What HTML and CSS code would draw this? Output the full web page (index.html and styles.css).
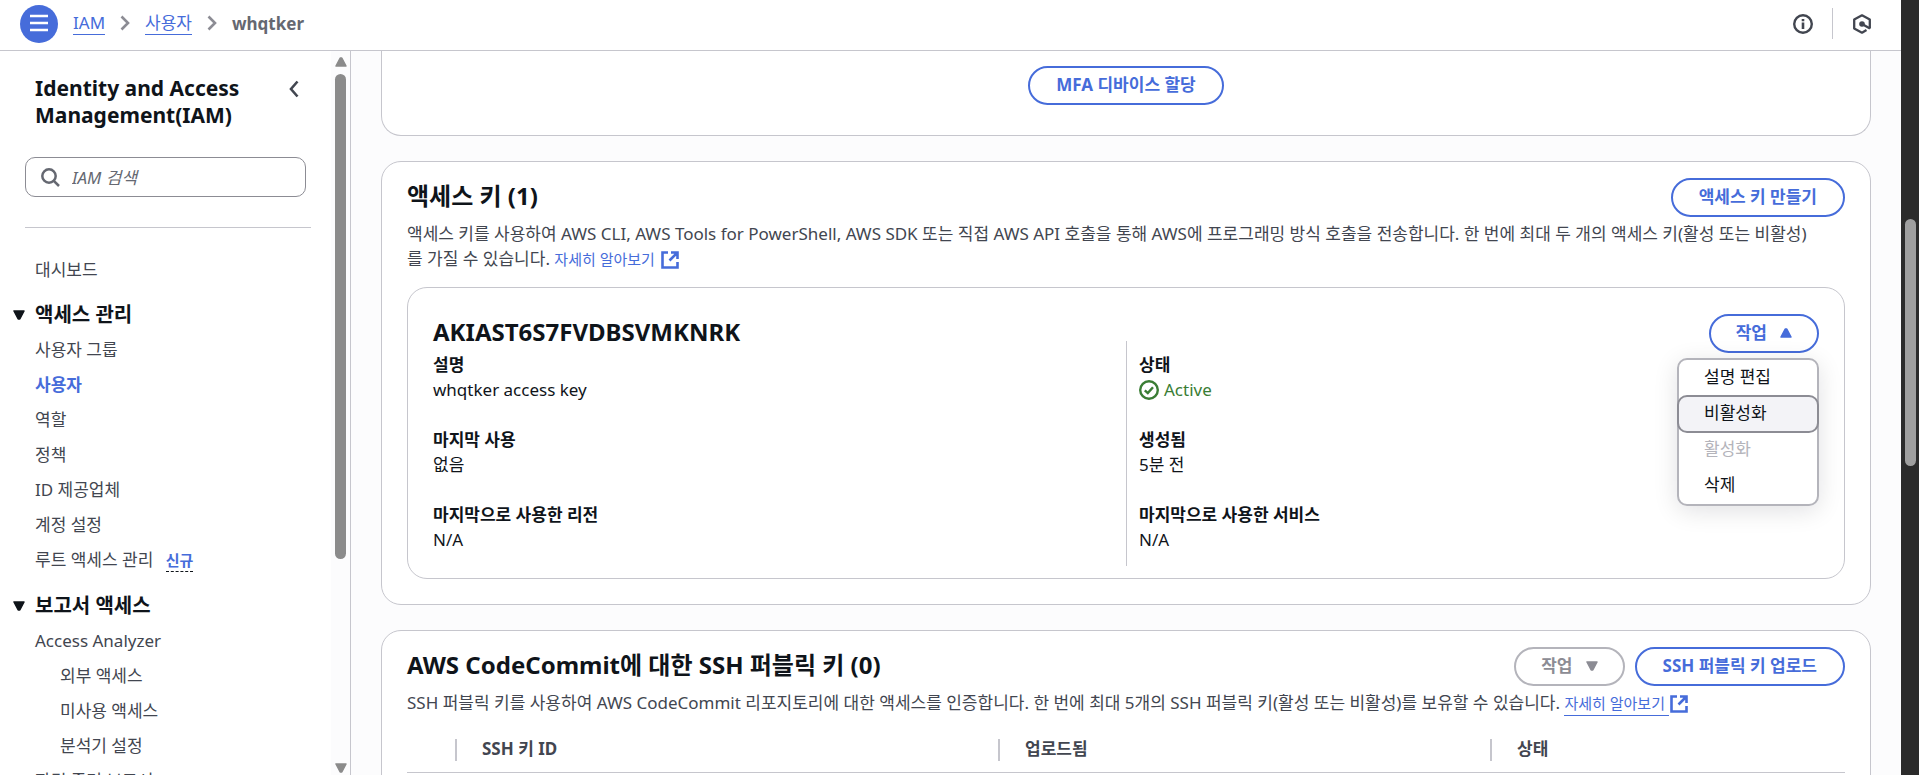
FILE: index.html
```html
<!DOCTYPE html>
<html lang="ko">
<head>
<meta charset="utf-8">
<title>whqtker | IAM</title>
<link rel="stylesheet" href="styles.css">
</head>
<body>
<svg class="sprite" aria-hidden="true">
  <symbol id="i-ext" viewBox="0 0 18 18"><path d="M7 1.500H1.500v15h15V11M10 1.500h6.500V8M16 2 8.500 9.500" fill="none" stroke="currentColor" stroke-width="2.600"/></symbol>
  <symbol id="i-right" viewBox="0 0 10 16"><path d="M1.500 1.500 8 8l-6.500 6.500" fill="none" stroke="currentColor" stroke-width="2.600"/></symbol>
  <symbol id="i-down" viewBox="0 0 12 10"><path d="M1 1h10L6.800 9H5.200z" fill="currentColor" stroke="currentColor" stroke-width="1.500" stroke-linejoin="round"/></symbol>
  <symbol id="i-up" viewBox="0 0 12 10"><path d="M1 9h10L6.800 1H5.200z" fill="currentColor" stroke="currentColor" stroke-width="1.500" stroke-linejoin="round"/></symbol>
</svg>
<div class="app">
  <div class="page">
    <header class="topbar">
      <button class="menu-btn" type="button" aria-label="메뉴">
        <svg width="20" height="18" viewBox="0 0 20 18"><path d="M1 2h18M1 9h18M1 16h18" stroke="currentColor" stroke-width="2.500"/></svg>
      </button>
      <nav class="crumbs" aria-label="이동 경로">
        <a href="#">IAM</a>
        <svg class="sep"><use href="#i-right"/></svg>
        <a href="#">사용자</a>
        <svg class="sep"><use href="#i-right"/></svg>
        <span class="current">whqtker</span>
      </nav>
      <div class="tools">
        <button class="tool" type="button" aria-label="정보">
          <svg width="20" height="20" viewBox="0 0 20 20"><circle cx="10" cy="10" r="8.800" fill="none" stroke="currentColor" stroke-width="2.400"/><path d="M10 8.500V15M10 5v2.200" stroke="currentColor" stroke-width="2.600"/></svg>
        </button>
        <button class="tool tool-last" type="button" aria-label="CloudShell">
          <svg width="20" height="20" viewBox="0 0 20 20"><path d="M14.500 16 10 18.700 2.200 14.400V5.600L10 1.300l7.800 4.300v8.800" fill="none" stroke="currentColor" stroke-width="2.300" stroke-linejoin="round"/><circle cx="10" cy="10" r="2.800" fill="currentColor"/><path d="M10 10 18 14.500" stroke="currentColor" stroke-width="2.400"/></svg>
        </button>
      </div>
    </header>
    <div class="body">
      <aside class="side">
        <div class="side-content">
          <div class="side-head">
            <h2>Identity and Access Management(IAM)</h2>
            <button class="collapse" type="button" aria-label="탐색 닫기">
              <svg width="10" height="18" viewBox="0 0 10 18"><path d="M8.500 1.500 2 9l6.500 7.500" fill="none" stroke="currentColor" stroke-width="2.600"/></svg>
            </button>
          </div>
          <label class="search">
            <svg width="19" height="19" viewBox="0 0 19 19"><circle cx="8" cy="8" r="6.700" fill="none" stroke="currentColor" stroke-width="2.500"/><path d="m12.800 12.800 5.200 5.200" stroke="currentColor" stroke-width="2.500"/></svg>
            <input type="text" placeholder="IAM 검색" aria-label="IAM 검색">
          </label>
          <nav class="nav" aria-label="IAM">
            <a class="first" href="#">대시보드</a>
            <button class="group" type="button"><svg class="tri"><use href="#i-down"/></svg>액세스 관리</button>
            <a href="#">사용자 그룹</a>
            <a class="active" href="#">사용자</a>
            <a href="#">역할</a>
            <a href="#">정책</a>
            <a href="#">ID 제공업체</a>
            <a href="#">계정 설정</a>
            <a href="#">루트 액세스 관리 <span class="new">신규</span></a>
            <button class="group" type="button"><svg class="tri"><use href="#i-down"/></svg>보고서 액세스</button>
            <a href="#">Access Analyzer</a>
            <a class="sub" href="#">외부 액세스</a>
            <a class="sub" href="#">미사용 액세스</a>
            <a class="sub" href="#">분석기 설정</a>
            <a href="#">자격 증명 보고서</a>
          </nav>
        </div>
        <div class="side-scroll" aria-hidden="true">
          <svg class="tri"><use href="#i-up"/></svg>
          <div class="track"><div class="thumb"></div></div>
          <svg class="tri"><use href="#i-down"/></svg>
        </div>
      </aside>
      <main class="main">
        <section class="card card-mfa">
          <button class="btn" type="button">MFA 디바이스 할당</button>
        </section>

        <section class="card">
          <div class="card-head">
            <h2>액세스 키 (1)</h2>
            <button class="btn" type="button">액세스 키 만들기</button>
          </div>
          <p class="desc">액세스 키를 사용하여 AWS CLI, AWS Tools for PowerShell, AWS SDK 또는 직접 AWS API 호출을 통해 AWS에 프로그래밍 방식 호출을 전송합니다. 한 번에 최대 두 개의 액세스 키(활성 또는 비활성)를 가질 수 있습니다. <a class="more" href="#"><span>자세히 알아보기</span><svg class="ext"><use href="#i-ext"/></svg></a></p>
          <article class="key">
            <div class="key-head">
              <h3>AKIAST6S7FVDBSVMKNRK</h3>
              <div class="menu-wrap">
                <button class="btn btn-menu" type="button" aria-expanded="true">작업<svg class="tri"><use href="#i-up"/></svg></button>
                <div class="menu" role="menu">
                  <button type="button" role="menuitem">설명 편집</button>
                  <button class="hover" type="button" role="menuitem">비활성화</button>
                  <button type="button" role="menuitem" disabled>활성화</button>
                  <button type="button" role="menuitem">삭제</button>
                </div>
              </div>
            </div>
            <div class="cols">
              <dl>
                <div><dt>설명</dt><dd>whqtker access key</dd></div>
                <div><dt>마지막 사용</dt><dd>없음</dd></div>
                <div><dt>마지막으로 사용한 리전</dt><dd>N/A</dd></div>
              </dl>
              <dl>
                <div><dt>상태</dt><dd class="ok"><svg width="20" height="20" viewBox="0 0 20 20"><circle cx="10" cy="10" r="8.800" fill="none" stroke="currentColor" stroke-width="2.400"/><path d="m5.800 10.300 3 2.800 5.200-5.900" fill="none" stroke="currentColor" stroke-width="2.400"/></svg>Active</dd></div>
                <div><dt>생성됨</dt><dd>5분 전</dd></div>
                <div><dt>마지막으로 사용한 서비스</dt><dd>N/A</dd></div>
              </dl>
            </div>
          </article>
        </section>

        <section class="card card-ssh">
          <div class="card-head">
            <h2>AWS CodeCommit에 대한 SSH 퍼블릭 키 (0)</h2>
            <div class="actions">
              <button class="btn btn-menu" type="button" disabled>작업<svg class="tri"><use href="#i-down"/></svg></button>
              <button class="btn" type="button">SSH 퍼블릭 키 업로드</button>
            </div>
          </div>
          <p class="desc">SSH 퍼블릭 키를 사용하여 AWS CodeCommit 리포지토리에 대한 액세스를 인증합니다. 한 번에 최대 5개의 SSH 퍼블릭 키(활성 또는 비활성)를 보유할 수 있습니다. <a class="more lined" href="#"><span>자세히 알아보기</span><svg class="ext"><use href="#i-ext"/></svg></a></p>
          <table class="table">
            <colgroup><col class="c-pick"><col class="c-id"><col class="c-date"><col></colgroup>
            <thead><tr><td></td><th scope="col">SSH 키 ID</th><th scope="col">업로드됨</th><th scope="col">상태</th></tr></thead>
          </table>
        </section>
      </main>
    </div>
  </div>
  <div class="page-scroll" aria-hidden="true"><div class="page-thumb"></div></div>
</div>
</body>
</html>
```
FILE: styles.css
```css
:root {
  --blue: #466cda;
  --line: #c6c6cd;
  --text: #0f141a;
  --muted: #424650;
}
* { box-sizing: border-box; }
body {
  margin: 0;
  color: var(--text);
  background: #fcfcfd;
  font: 17px/25px "Noto Sans", "Noto Sans CJK KR", sans-serif;
}
button, input { font: inherit; color: inherit; }
button { padding: 0; border: 0; background: none; cursor: pointer; }
h2, h3, p, dl, dd { margin: 0; }
a { color: var(--blue); text-decoration: none; }
svg { display: block; flex: none; }
.sprite { display: none; }
.tri { width: 12px; height: 10px; }

.app { display: flex; height: 100vh; overflow: hidden; }
.page { flex: 1; min-width: 0; display: flex; flex-direction: column; }
.page-scroll { width: 18px; flex: none; padding: 219px 3px 0 4px; background: #2b2b2b; }
.page-thumb { height: 247px; border-radius: 6px; background: #9f9f9f; }

.topbar {
  flex: none;
  display: flex;
  align-items: center;
  height: 51px;
  padding: 0 29px 3px 20px;
  border-bottom: 1px solid var(--line);
  background: #fff;
}
.menu-btn {
  display: grid;
  place-items: center;
  width: 38px;
  height: 38px;
  padding-bottom: 2px;
  border-radius: 50%;
  background: var(--blue);
  color: #fff;
}
.crumbs { display: flex; align-items: center; gap: 15px; margin-left: 15px; padding-bottom: 1px; }
.crumbs a { border-bottom: 1px solid; line-height: 22px; }
.crumbs .sep { width: 10px; height: 16px; color: #8c8c94; }
.crumbs .current { font-weight: 700; color: #656871; }
.tools { display: flex; align-items: center; margin-left: auto; color: var(--muted); }
.tool { display: flex; align-items: center; height: 31px; }
.tool-last { margin-left: 19px; padding-left: 19px; border-left: 1px solid var(--line); }

.body { flex: 1; min-height: 0; display: flex; }
.side { flex: none; display: flex; width: 351px; border-right: 1px solid var(--line); background: #fff; }
.side-content { flex: 1; overflow: hidden; padding: 24px 20px 0 25px; }
.side-scroll { display: flex; flex-direction: column; align-items: center; width: 19px; padding: 6px 0 2px; background: #fcfcfd; color: #8b8b8b; }
.track { flex: 1; width: 11px; padding: 7px 0; }
.thumb { height: 485px; border-radius: 6px; background: #8b8b8b; }
.side-head { display: flex; justify-content: space-between; padding: 0 12px 28px 10px; }
.side-head h2 { width: 230px; font-size: 21px; line-height: 27px; }
.collapse { display: flex; align-items: flex-start; padding-top: 5px; color: var(--muted); }
.search {
  display: flex;
  align-items: center;
  gap: 12px;
  height: 40px;
  margin-right: 5px;
  padding: 0 15px;
  border: 1px solid #8c8c94;
  border-radius: 10px;
  color: #656871;
}
.search input { flex: 1; min-width: 0; padding: 0; border: 0; outline: 0; background: none; font-style: italic; }
.search input::placeholder { color: #656871; opacity: 1; }
.nav { margin-top: 30px; padding: 25px 0 0 10px; border-top: 1px solid var(--line); }
.nav a { display: block; line-height: 25px; margin-bottom: 10px; white-space: nowrap; color: var(--muted); }
.nav .first { margin-top: 4px; margin-bottom: 20px; }
.nav .active { font-weight: 700; color: var(--blue); }
.nav .sub { margin-left: 25px; }
.nav .group { display: flex; align-items: center; gap: 10px; margin: 0 0 10px -22px; font-size: 20px; font-weight: 700; line-height: 25px; }
.nav a + .group { margin-top: 20px; }
.nav .new { margin-left: 8px; padding-bottom: 1px; border-bottom: 1px dashed var(--text); font-size: 15px; font-weight: 700; color: var(--blue); }

.main { flex: 1; min-width: 0; display: flex; flex-direction: column; gap: 25px; padding: 0 30px; overflow: hidden; }
.card { flex: none; padding: 16px 25px 25px; border: 1px solid var(--line); border-radius: 20px; background: #fff; }
.card-mfa { display: flex; justify-content: center; padding: 15px 25px 30px; border-top: 0; border-radius: 0 0 20px 20px; }
.card-head, .key-head { display: flex; justify-content: space-between; }
.card-head h2, .key-head h3 { font-size: 24px; line-height: 35px; }
.btn {
  height: 39px;
  padding: 0 26px 2px;
  border: 2px solid var(--blue);
  border-radius: 20px;
  background: #fff;
  color: var(--blue);
  font-weight: 700;
  white-space: nowrap;
}
.btn:disabled { border-color: #b4b4bb; color: #8c8c94; }
.btn-menu { display: flex; align-items: center; gap: 13px; padding: 0 25px 2px; }
.actions { display: flex; gap: 10px; }
.desc { margin-top: 4px; padding-right: 25px; color: var(--muted); }
.more { font-size: 15px; }
.more .ext { display: inline-block; width: 18px; height: 18px; margin-left: 6px; vertical-align: -4px; }
.lined span { padding: 0 4px 2px 0; border-bottom: 1px solid; }
.lined .ext { margin-left: 1px; }

.key { margin-top: 15px; padding: 26px 25px 12px; border: 1px solid var(--line); border-radius: 20px; }
.key-head { height: 27px; }
.cols { display: grid; grid-template-columns: 1fr 1fr; }
.cols dl { display: grid; gap: 25px; padding: 11px 0 14px; }
.cols dl + dl { padding-left: 12px; border-left: 1px solid var(--line); }
dt { font-weight: 700; }
.ok { display: flex; align-items: center; gap: 5px; color: #3a7d34; }

.menu-wrap { position: relative; }
.menu {
  position: absolute;
  top: 44px;
  right: 0;
  z-index: 1;
  display: flex;
  flex-direction: column;
  width: 142px;
  border: 2px solid #b4b4bb;
  border-radius: 10px;
  background: #fff;
  box-shadow: 0 5px 25px rgba(0, 7, 22, .12);
}
.menu button { height: 36px; padding: 0 25px 4px; text-align: left; }
.menu .hover { height: 38px; margin: -1px -2px; border: 2px solid #8c8c94; border-radius: 10px; background: #f3f3f7; }
.menu button:disabled { color: #b4b4bb; }

.table { width: 100%; margin-top: 15px; table-layout: fixed; border-collapse: collapse; border-bottom: 1px solid var(--line); }
.c-pick { width: 48px; }
.c-id { width: 543px; }
.c-date { width: 492px; }
.table td, .table th { height: 41px; padding: 0; }
.table th { position: relative; padding: 0 25px 5px 27px; text-align: left; color: var(--muted); }
.table th::before { content: ""; position: absolute; left: 0; top: 8px; height: 22px; border-left: 2px solid var(--line); }
```
